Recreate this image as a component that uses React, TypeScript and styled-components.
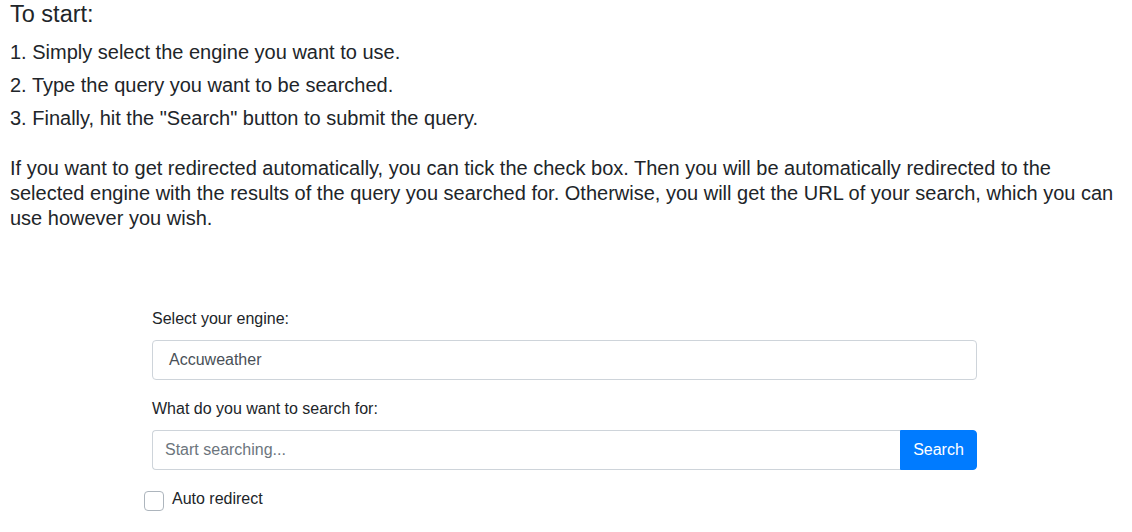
import styled, { createGlobalStyle } from "styled-components";

const GlobalStyle = createGlobalStyle`
  body {
    margin: 0;
    background: #fff;
    color: #212529;
    font-family: "Liberation Sans", Arial, sans-serif;
  }
`;

const Page = styled.div`
  padding: 0 10px;
`;

const Title = styled.h2`
  margin: 0 0 8px;
  font-size: 23.5px;
  font-weight: 400;
  line-height: 28px;
`;

const Step = styled.p`
  margin: 0;
  font-size: 20px;
  line-height: 33px;
`;

const Intro = styled.p`
  margin: 21px 0 0;
  font-size: 20px;
  line-height: 25px;
`;

const Form = styled.form`
  width: 825px;
  margin: 76px 0 0 142px;
`;

const Group = styled.div`
  margin-bottom: 17px;
`;

const Label = styled.label`
  display: block;
  font-size: 16px;
  line-height: 24px;
  margin-bottom: 9px;
`;

const Field = styled.div`
  box-sizing: border-box;
  height: 40px;
  border: 1px solid #ced4da;
  border-radius: 4px;
  padding: 0 16px;
  display: flex;
  align-items: center;
  font-size: 16px;
  color: #495057;
`;

const InputGroup = styled.div`
  display: flex;
  height: 40px;
`;

const Input = styled.input`
  flex: 1;
  box-sizing: border-box;
  border: 1px solid #ced4da;
  border-right: none;
  border-radius: 4px 0 0 4px;
  padding: 0 12px;
  font-family: inherit;
  font-size: 16px;
  color: #495057;
  outline: none;

  &::placeholder {
    color: #6c757d;
  }
`;

const Button = styled.button`
  width: 77px;
  border: 1px solid #007bff;
  border-radius: 0 4px 4px 0;
  background: #007bff;
  color: #fff;
  font-family: inherit;
  font-size: 16px;
`;

const Check = styled.label`
  display: flex;
  align-items: flex-start;
  gap: 8px;
  margin-left: -8px;
  font-size: 16px;
  line-height: 24px;
`;

const Box = styled.input`
  appearance: none;
  margin: 4px 0 0;
  width: 20px;
  height: 20px;
  box-sizing: border-box;
  border: 1px solid #adb5bd;
  border-radius: 4px;
  background: #fff;
`;

export default function App() {
  return (
    <Page>
      <GlobalStyle />
      <Title>To start:</Title>
      <Step>1. Simply select the engine you want to use.</Step>
      <Step>2. Type the query you want to be searched.</Step>
      <Step>3. Finally, hit the "Search" button to submit the query.</Step>
      <Intro>
        If you want to get redirected automatically, you can tick the check box. Then you will be
        automatically redirected to the selected engine with the results of the query you searched
        for. Otherwise, you will get the URL of your search, which you can use however you wish.
      </Intro>
      <Form onSubmit={(e) => e.preventDefault()}>
        <Group>
          <Label>Select your engine:</Label>
          <Field>Accuweather</Field>
        </Group>
        <Group>
          <Label>What do you want to search for:</Label>
          <InputGroup>
            <Input placeholder="Start searching..." />
            <Button type="submit">Search</Button>
          </InputGroup>
        </Group>
        <Check>
          <Box type="checkbox" />
          Auto redirect
        </Check>
      </Form>
    </Page>
  );
}
